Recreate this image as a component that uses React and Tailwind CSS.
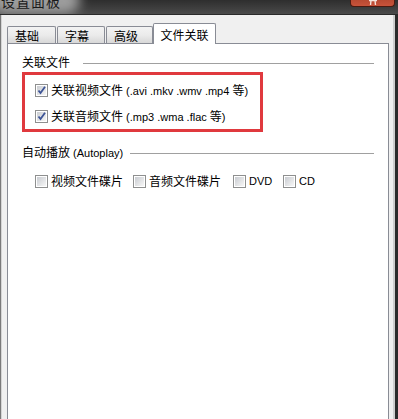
import React from 'react';

const Checkbox = ({ checked }) => (
  <span className="flex w-[13px] h-[13px] shrink-0 border border-[#8e8f8f] bg-white p-px relative">
    <span className="flex-1 bg-gradient-to-br from-[#c9ccd1] to-[#f7f7f7]" />
    {checked && (
      <svg className="absolute inset-0" width="11" height="11" viewBox="0 0 11 11">
        <path d="M2.5 5.5 L4.5 8 L9 1.8" fill="none" stroke="#3d5496" strokeWidth="1.8" />
      </svg>
    )}
  </span>
);

const Tab = ({ label, width, active }) =>
  active ? (
    <div
      className="relative z-10 -ml-px -mb-px h-[21px] flex items-start pt-[3px] justify-center border border-b-0 border-[#898c95] bg-white rounded-t-[2px]"
      style={{ width }}
    >
      {label}
    </div>
  ) : (
    <div
      className="h-[17px] flex items-start pt-[1px] pl-[7px] border border-b-0 border-[#898c95] bg-gradient-to-b from-[#f3f3f3] via-[#ebebeb] to-[#d8d8d8] rounded-t-[2px] mr-px"
      style={{ width }}
    >
      {label}
    </div>
  );

const GroupHeader = ({ children, gap }) => (
  <div className="flex items-center h-[14px]">
    <span className="leading-[14px] whitespace-nowrap">{children}</span>
    <span className={`flex-1 h-px bg-[#a0a0a0] ${gap}`} />
  </div>
);

export default function App() {
  return (
    <div className="w-[398px] h-[419px] overflow-hidden flex flex-col bg-[#f0f0f0] text-[12px] text-black font-['Liberation_Sans','Noto_Sans_CJK_SC',sans-serif]">
      {/* title bar */}
      <div className="h-[15px] shrink-0 flex justify-between bg-gradient-to-b from-[#2e2e2e] to-[#4a4a4a] border-b border-[#2a2a2a] overflow-hidden">
        <div className="relative pl-[1px]">
          <div className="absolute -left-[10px] -top-[14px] w-[90px] h-[28px] rounded-full bg-[#b8b8b8] blur-[6px] opacity-80" />
          <span className="relative block -mt-[7px] text-[14px] leading-[18px] text-[#1a1a1a] tracking-[1px]">设置面板</span>
        </div>
        <div className="flex">
          <div className="w-[45px] h-[7px] rounded-b-[4px] border border-t-0 border-[#4a1a10] bg-gradient-to-b from-[#b84a32] to-[#c8533a] flex justify-center">
            <svg width="10" height="6" viewBox="0 0 10 6">
              <path d="M1 0.5 H9 M3 0.5 L2.5 5 M7 0.5 L7.5 5" stroke="#f4e4dc" strokeWidth="1.4" fill="none" />
            </svg>
          </div>
          <div className="w-[3px]" />
        </div>
      </div>

      <div className="flex flex-1 min-h-0">
        <div className="w-px bg-[#7a7a7a]" />
        <div className="w-px bg-[#d4d4d4]" />

        <div className="flex-1 flex flex-col pl-[5px] pt-[8px] min-w-0">
          {/* tabs */}
          <div className="flex items-end h-[20px]">
            <Tab label="基础" width={49} />
            <Tab label="字幕" width={48} />
            <Tab label="高级" width={47} />
            <Tab label="文件关联" width={63} active />
          </div>

          {/* panel */}
          <div className="flex-1 border border-b-0 border-[#898c95] bg-white px-[14px] pt-[12px]">
            <GroupHeader gap="ml-[13px]">关联文件</GroupHeader>

            <div className="mt-[2px] w-[241px] border-[3px] border-[#e0393e] pl-[10px] pt-[9px] pb-[6px] flex flex-col gap-[13px]">
              <label className="flex items-center h-[13px] gap-[3px] whitespace-nowrap">
                <Checkbox checked />
                <span>
                  关联视频文件<span className="text-[11px]"> (.avi .mkv .wmv .mp4 </span>等<span className="text-[11px]">)</span>
                </span>
              </label>
              <label className="flex items-center h-[13px] gap-[3px] whitespace-nowrap">
                <Checkbox checked />
                <span>
                  关联音频文件<span className="text-[11px]"> (.mp3 .wma .flac </span>等<span className="text-[11px]">)</span>
                </span>
              </label>
            </div>

            <div className="mt-[14px]">
              <GroupHeader gap="ml-[7px]">
                自动播放<span className="text-[11px]"> (Autoplay)</span>
              </GroupHeader>
            </div>

            <div className="mt-[15px] ml-[13px] flex items-center h-[13px] whitespace-nowrap">
              <label className="flex items-center gap-[3px] w-[98px]">
                <Checkbox />
                <span>视频文件碟片</span>
              </label>
              <label className="flex items-center gap-[3px] w-[100px]">
                <Checkbox />
                <span>音频文件碟片</span>
              </label>
              <label className="flex items-center gap-[3px] w-[50px]">
                <Checkbox />
                <span className="text-[11px]">DVD</span>
              </label>
              <label className="flex items-center gap-[3px]">
                <Checkbox />
                <span className="text-[11px]">CD</span>
              </label>
            </div>
          </div>
        </div>

        <div className="w-[4px]" />
        <div className="w-[2px] bg-[#cfcfcf]" />
        <div className="w-[3px] bg-[#2c2c2c]" />
      </div>
    </div>
  );
}
